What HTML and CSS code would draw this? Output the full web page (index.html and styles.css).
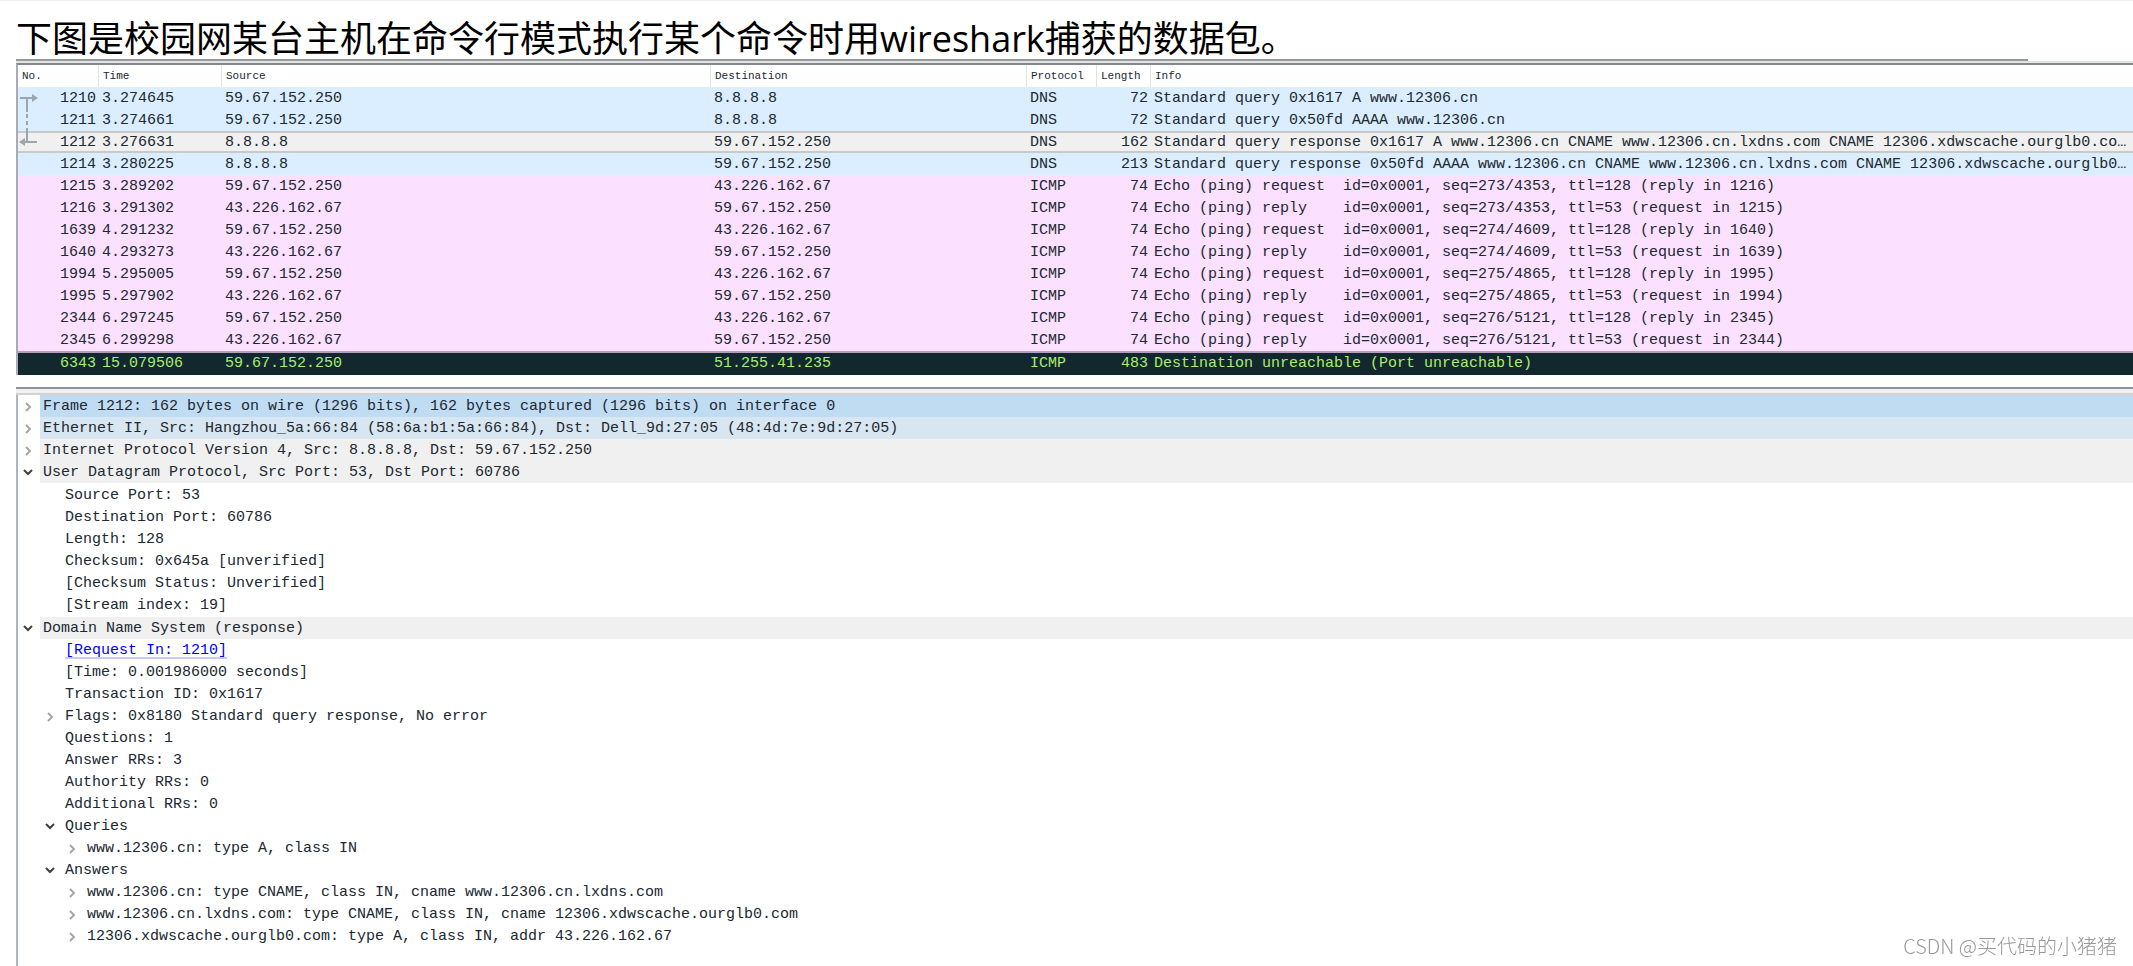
FILE: index.html
```
<!DOCTYPE html>
<html lang="zh-CN">
<head>
<meta charset="utf-8">
<title>Wireshark</title>
<link rel="stylesheet" href="styles.css">
</head>
<body>
<svg class="defs" aria-hidden="true">
  <symbol id="closed" viewBox="0 0 10 10"><path d="M3 1l4 4-4 4" fill="none" stroke="#a6a6a6" stroke-width="2"/></symbol>
  <symbol id="open" viewBox="0 0 10 10"><path d="M1 2l4 4 4-4" fill="none" stroke="#404040" stroke-width="2"/></symbol>
</svg>
<main class="page">
  <h1 class="title">下图是校园网某台主机在命令行模式执行某个命令时用wireshark捕获的数据包。</h1>
  <div class="rule"></div>
  <section class="packets">
    <table class="list">
      <colgroup><col class="c-no"><col class="c-time"><col class="c-src"><col class="c-dst"><col class="c-proto"><col class="c-len"><col></colgroup>
      <thead><tr><th>No.</th><th>Time</th><th>Source</th><th>Destination</th><th>Protocol</th><th>Length</th><th>Info</th></tr></thead>
      <tbody>
        <tr class="dns"><td class="num first">1210<svg class="link" viewBox="0 0 20 54" aria-hidden="true"><g fill="none" stroke="#9ba7b0" stroke-width="2"><path d="M1 6h15M8 6v14M8 38v12M1 50h17"/><path d="M8 22v16" stroke-dasharray="4 3"/></g><path d="M13 2l6 4-6 4zM6 46l-6 4 6 4z" fill="#9ba7b0"/></svg></td><td>3.274645</td><td>59.67.152.250</td><td>8.8.8.8</td><td>DNS</td><td class="num">72</td><td>Standard query 0x1617 A www.12306.cn</td></tr>
        <tr class="dns"><td class="num">1211</td><td>3.274661</td><td>59.67.152.250</td><td>8.8.8.8</td><td>DNS</td><td class="num">72</td><td>Standard query 0x50fd AAAA www.12306.cn</td></tr>
        <tr class="selected"><td class="num">1212</td><td>3.276631</td><td>8.8.8.8</td><td>59.67.152.250</td><td>DNS</td><td class="num">162</td><td>Standard query response 0x1617 A www.12306.cn CNAME www.12306.cn.lxdns.com CNAME 12306.xdwscache.ourglb0.com …</td></tr>
        <tr class="dns"><td class="num">1214</td><td>3.280225</td><td>8.8.8.8</td><td>59.67.152.250</td><td>DNS</td><td class="num">213</td><td>Standard query response 0x50fd AAAA www.12306.cn CNAME www.12306.cn.lxdns.com CNAME 12306.xdwscache.ourglb0.c…</td></tr>
        <tr class="icmp"><td class="num">1215</td><td>3.289202</td><td>59.67.152.250</td><td>43.226.162.67</td><td>ICMP</td><td class="num">74</td><td>Echo (ping) request  id=0x0001, seq=273/4353, ttl=128 (reply in 1216)</td></tr>
        <tr class="icmp"><td class="num">1216</td><td>3.291302</td><td>43.226.162.67</td><td>59.67.152.250</td><td>ICMP</td><td class="num">74</td><td>Echo (ping) reply    id=0x0001, seq=273/4353, ttl=53 (request in 1215)</td></tr>
        <tr class="icmp"><td class="num">1639</td><td>4.291232</td><td>59.67.152.250</td><td>43.226.162.67</td><td>ICMP</td><td class="num">74</td><td>Echo (ping) request  id=0x0001, seq=274/4609, ttl=128 (reply in 1640)</td></tr>
        <tr class="icmp"><td class="num">1640</td><td>4.293273</td><td>43.226.162.67</td><td>59.67.152.250</td><td>ICMP</td><td class="num">74</td><td>Echo (ping) reply    id=0x0001, seq=274/4609, ttl=53 (request in 1639)</td></tr>
        <tr class="icmp"><td class="num">1994</td><td>5.295005</td><td>59.67.152.250</td><td>43.226.162.67</td><td>ICMP</td><td class="num">74</td><td>Echo (ping) request  id=0x0001, seq=275/4865, ttl=128 (reply in 1995)</td></tr>
        <tr class="icmp"><td class="num">1995</td><td>5.297902</td><td>43.226.162.67</td><td>59.67.152.250</td><td>ICMP</td><td class="num">74</td><td>Echo (ping) reply    id=0x0001, seq=275/4865, ttl=53 (request in 1994)</td></tr>
        <tr class="icmp"><td class="num">2344</td><td>6.297245</td><td>59.67.152.250</td><td>43.226.162.67</td><td>ICMP</td><td class="num">74</td><td>Echo (ping) request  id=0x0001, seq=276/5121, ttl=128 (reply in 2345)</td></tr>
        <tr class="icmp"><td class="num">2345</td><td>6.299298</td><td>43.226.162.67</td><td>59.67.152.250</td><td>ICMP</td><td class="num">74</td><td>Echo (ping) reply    id=0x0001, seq=276/5121, ttl=53 (request in 2344)</td></tr>
        <tr class="error"><td class="num">6343</td><td>15.079506</td><td>59.67.152.250</td><td>51.255.41.235</td><td>ICMP</td><td class="num">483</td><td>Destination unreachable (Port unreachable)</td></tr>
      </tbody>
    </table>
  </section>
  <div class="splitter"></div>
  <section class="details">
    <ul class="tree">
      <li><div class="row"><button class="toggle" aria-label="Expand Frame"><svg><use href="#closed"/></svg></button><span class="label current">Frame 1212: 162 bytes on wire (1296 bits), 162 bytes captured (1296 bits) on interface 0</span></div></li>
      <li><div class="row"><button class="toggle" aria-label="Expand Ethernet"><svg><use href="#closed"/></svg></button><span class="label hover">Ethernet II, Src: Hangzhou_5a:66:84 (58:6a:b1:5a:66:84), Dst: Dell_9d:27:05 (48:4d:7e:9d:27:05)</span></div></li>
      <li><div class="row"><button class="toggle" aria-label="Expand Internet Protocol"><svg><use href="#closed"/></svg></button><span class="label proto">Internet Protocol Version 4, Src: 8.8.8.8, Dst: 59.67.152.250</span></div></li>
      <li><div class="row expanded"><button class="toggle" aria-label="Collapse User Datagram Protocol"><svg><use href="#open"/></svg></button><span class="label proto">User Datagram Protocol, Src Port: 53, Dst Port: 60786</span></div>
        <ul class="fields">
          <li class="field">Source Port: 53</li>
          <li class="field">Destination Port: 60786</li>
          <li class="field">Length: 128</li>
          <li class="field">Checksum: 0x645a [unverified]</li>
          <li class="field">[Checksum Status: Unverified]</li>
          <li class="field">[Stream index: 19]</li>
        </ul>
      </li>
      <li><div class="row"><button class="toggle" aria-label="Collapse Domain Name System"><svg><use href="#open"/></svg></button><span class="label proto">Domain Name System (response)</span></div>
        <ul class="fields">
          <li class="field"><a class="jump" href="#1210">[Request In: 1210]</a></li>
          <li class="field">[Time: 0.001986000 seconds]</li>
          <li class="field">Transaction ID: 0x1617</li>
          <li><div class="row"><button class="toggle" aria-label="Expand Flags"><svg><use href="#closed"/></svg></button><span class="label">Flags: 0x8180 Standard query response, No error</span></div></li>
          <li class="field">Questions: 1</li>
          <li class="field">Answer RRs: 3</li>
          <li class="field">Authority RRs: 0</li>
          <li class="field">Additional RRs: 0</li>
          <li><div class="row"><button class="toggle" aria-label="Collapse Queries"><svg><use href="#open"/></svg></button><span class="label">Queries</span></div>
            <ul class="nested">
              <li><div class="row"><button class="toggle" aria-label="Expand query"><svg><use href="#closed"/></svg></button><span class="label">www.12306.cn: type A, class IN</span></div></li>
            </ul>
          </li>
          <li><div class="row"><button class="toggle" aria-label="Collapse Answers"><svg><use href="#open"/></svg></button><span class="label">Answers</span></div>
            <ul class="nested">
              <li><div class="row"><button class="toggle" aria-label="Expand answer 1"><svg><use href="#closed"/></svg></button><span class="label">www.12306.cn: type CNAME, class IN, cname www.12306.cn.lxdns.com</span></div></li>
              <li><div class="row"><button class="toggle" aria-label="Expand answer 2"><svg><use href="#closed"/></svg></button><span class="label">www.12306.cn.lxdns.com: type CNAME, class IN, cname 12306.xdwscache.ourglb0.com</span></div></li>
              <li><div class="row"><button class="toggle" aria-label="Expand answer 3"><svg><use href="#closed"/></svg></button><span class="label">12306.xdwscache.ourglb0.com: type A, class IN, addr 43.226.162.67</span></div></li>
            </ul>
          </li>
        </ul>
      </li>
    </ul>
  </section>
</main>
<div class="watermark">CSDN @买代码的小猪猪</div>
</body>
</html>
```
FILE: styles.css
```
* { box-sizing: border-box; }
body {
  margin: 0;
  background: #fff;
  color: #202830;
  font: 15px/20px "Liberation Mono", "Noto Sans CJK SC", monospace;
}
.defs { position: absolute; width: 0; height: 0; }
.page {
  display: flex;
  flex-direction: column;
  min-height: 100vh;
  padding-left: 16px;
  border-top: 1px solid #eee;
}
.title {
  margin: 0;
  padding-top: 18px;
  color: #000;
  font: 400 36px/40px "Open Sans", "Noto Sans CJK SC", sans-serif;
  white-space: nowrap;
}
.rule {
  height: 2px;
  margin-right: 105px;
  background: #999;
}
.packets {
  border-top: 2px solid #e4e4e4;
  padding-bottom: 12px;
  border-bottom: 2px solid #8f939b;
}
.list {
  width: 100%;
  table-layout: fixed;
  border-spacing: 0;
  border-top: 2px solid #828790;
  border-left: 2px solid #a8adb5;
}
.c-no { width: 81px; }
.c-time { width: 123px; }
.c-src { width: 489px; }
.c-dst { width: 316px; }
.c-proto { width: 70px; }
.c-len { width: 54px; }
th {
  height: 22px;
  padding: 0 4px;
  border-right: 1px solid #e2e2e2;
  font-size: 11px;
  line-height: 22px;
  font-weight: 400;
  text-align: left;
}
th:last-child { border-right: 0; }
td {
  height: 22px;
  padding: 2px 3px 0;
  overflow: hidden;
  text-overflow: ellipsis;
  white-space: pre;
}
.num { text-align: right; }
.first { position: relative; overflow: visible; }
.link { position: absolute; left: 1px; top: 5px; width: 20px; height: 54px; }
.dns { background: #daeeff; }
.icmp { background: #fce0ff; }
.selected { background: #f0f0f0; }
.selected td { box-shadow: inset 0 2px #c9c9c9, inset 0 -2px #c9c9c9; }
.error { background: #12272e; color: #a9ee6e; }
.error td { height: 24px; padding-top: 0; border-top: 2px solid #b3a0ba; }
.splitter { height: 6px; background: #f0f0f0; border-bottom: 2px solid #d2d2d2; }
.details { flex: 1; border-left: 2px solid #b0b5bb; }
ul { margin: 0; padding: 0; list-style: none; }
.fields, .nested { padding-left: 22px; }
.fields { padding-bottom: 1px; }
.row { display: flex; height: 22px; }
.expanded { margin-bottom: 1px; }
.toggle {
  display: flex;
  align-items: center;
  width: 22px;
  padding: 2px 0 0 5px;
  border: 0;
  background: none;
}
.toggle svg { width: 10px; height: 10px; }
.label { flex: 1; padding: 2px 0 0 3px; white-space: nowrap; }
.current { background: #c0dcf3; }
.hover { background: #d8e6f1; }
.proto { background: #f0f0f0; }
.field { height: 22px; padding: 2px 0 0 25px; white-space: nowrap; }
.jump { color: #0000ff; text-decoration-color: #c8c8ff; text-decoration-thickness: 2px; text-underline-offset: 3px; }
.watermark {
  position: fixed;
  right: 16px;
  bottom: 8px;
  color: #999;
  font: 300 20px/24px "Noto Sans CJK SC", sans-serif;
}
```
